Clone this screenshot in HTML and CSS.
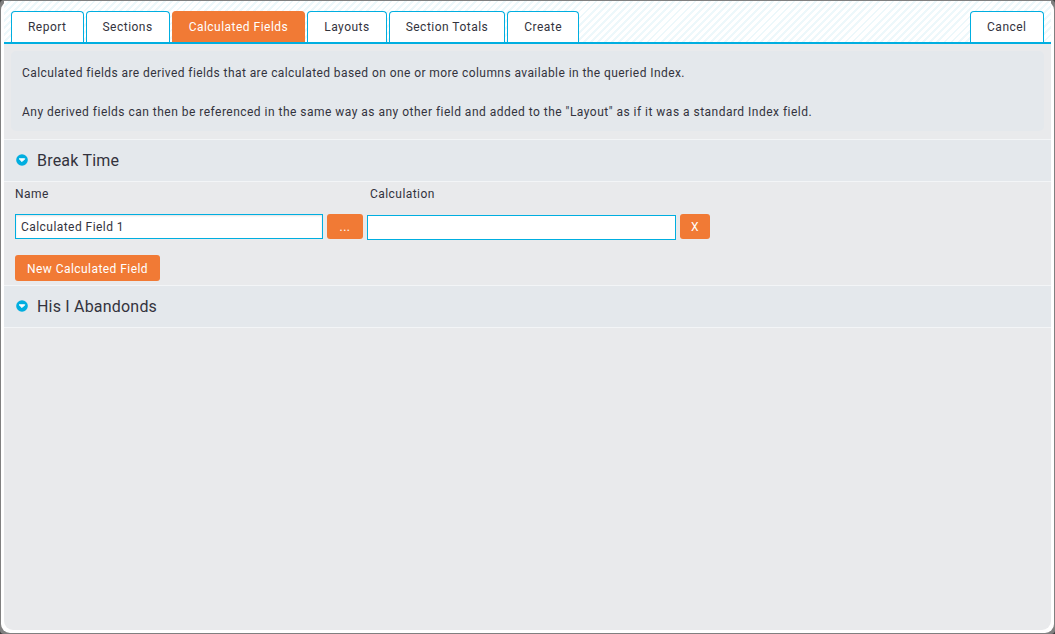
FILE: index.html
```html
<!DOCTYPE html>
<html lang="en">
<head>
<meta charset="utf-8">
<title>Calculated Fields</title>
<link rel="stylesheet" href="styles.css">
</head>
<body>
<div class="window">
  <div class="panel">
    <nav class="tabbar">
      <a class="tab">Report</a>
      <a class="tab">Sections</a>
      <a class="tab active">Calculated Fields</a>
      <a class="tab">Layouts</a>
      <a class="tab">Section Totals</a>
      <a class="tab">Create</a>
      <a class="tab cancel">Cancel</a>
    </nav>
    <main class="content">
      <div class="info">
        <p class="line-one">Calculated fields are derived fields that are calculated based on one or more columns available in the queried Index.</p>
        <p>Any derived fields can then be referenced in the same way as any other field and added to the "Layout" as if it was a standard Index field.</p>
      </div>
      <div class="section-head">
        <svg class="chev" viewBox="0 0 12 12" width="12" height="12"><circle cx="6" cy="6" r="5.8" fill="#00aee0"/><path d="M3.2 4.8h5.6L6 7.6z" fill="#fff" stroke="#fff" stroke-linejoin="round"/></svg>
        <span>Break Time</span>
      </div>
      <div class="section-body">
        <div class="labels">
          <span class="label-name">Name</span>
          <span>Calculation</span>
        </div>
        <div class="row">
          <input class="field name" type="text" value="Calculated Field 1">
          <button class="btn dots">...</button>
          <input class="field calc" type="text">
          <button class="btn x">X</button>
        </div>
        <button class="btn new">New Calculated Field</button>
      </div>
      <div class="section-head">
        <svg class="chev" viewBox="0 0 12 12" width="12" height="12"><circle cx="6" cy="6" r="5.8" fill="#00aee0"/><path d="M3.2 4.8h5.6L6 7.6z" fill="#fff" stroke="#fff" stroke-linejoin="round"/></svg>
        <span>His I Abandonds</span>
      </div>
    </main>
  </div>
</div>
</body>
</html>
```
FILE: styles.css
```css
* { box-sizing: border-box; }
html, body { margin: 0; height: 100%; }
body {
  background: #3a3a3a;
  font-family: Roboto, "Liberation Sans", sans-serif;
  font-size: 12px;
  letter-spacing: 0.45px;
  color: #33333d;
}
.window {
  height: 634px;
  background: #808080;
  padding: 1px;
  border-radius: 4px;
}
.panel {
  height: 100%;
  background: #fff;
  border-radius: 9px;
  padding: 0 3px 3px 3px;
  display: flex;
  flex-direction: column;
}
.tabbar {
  display: flex;
  height: 43px;
  padding: 10px 7px 0 7px;
  gap: 2px;
  border-bottom: 2px solid #00aee0;
  background: repeating-linear-gradient(135deg, #fff 0, #fff 3px, #edf8fb 3px, #edf8fb 5px);
}
.tab {
  height: 31px;
  padding: 0 16px;
  line-height: 31px;
  letter-spacing: 0.48px;
  background: #fff;
  border: 1px solid #00aee0;
  border-bottom: 0;
  border-radius: 4px 4px 0 0;
  white-space: nowrap;
}
.tab.active {
  background: #f17a35;
  border-color: #f17a35;
  color: #fff;
}
.cancel { margin-left: auto; padding: 0 16.5px; }
.content {
  flex: 1;
  background: #e9eaec;
  border-radius: 0 0 9px 9px;
  padding-top: 7px;
}
.info {
  margin: 0 7px;
  height: 80px;
  padding: 15px 11px 0;
  background: #e4e8ec;
  border-radius: 5px;
}
.info p { margin: 0 0 25px; line-height: 14px; letter-spacing: 0.48px; }
.info .line-one { letter-spacing: 0.42px; }
.section-head {
  height: 43px;
  display: flex;
  align-items: center;
  gap: 9px;
  padding-left: 12px;
  background: #e4e8ec;
  border-top: 1px solid #f3f5f7;
  border-bottom: 1px solid #f3f5f7;
  font-size: 16px;
  letter-spacing: 0.2px;
}
.info + .section-head { margin-top: 8px; }
.chev { margin-top: -1px; }
.section-body { padding: 5px 11px 4px; }
.labels { display: flex; height: 14px; line-height: 14px; }
.label-name { width: 355px; }
.row { display: flex; align-items: flex-start; margin-top: 13px; }
.field {
  height: 25px;
  border: 1px solid #00aee0;
  background: #fff;
  padding: 0 5px;
  font: inherit;
  letter-spacing: inherit;
  color: inherit;
  border-radius: 0;
  outline: 0;
}
.name { width: 308px; box-shadow: inset 0 1px 2px rgba(0, 0, 0, 0.12); }
.calc { width: 309px; margin: 1px 0 0 4px; }
.btn {
  background: #f17a35;
  border: 0;
  border-radius: 3px;
  color: #fff;
  font: inherit;
  letter-spacing: inherit;
  padding: 0;
  height: 25px;
}
.dots { width: 36px; margin-left: 4px; }
.x { width: 30px; margin-left: 4px; }
.new { display: block; width: 145px; height: 26px; margin-top: 15px; padding-top: 1px; }
```
